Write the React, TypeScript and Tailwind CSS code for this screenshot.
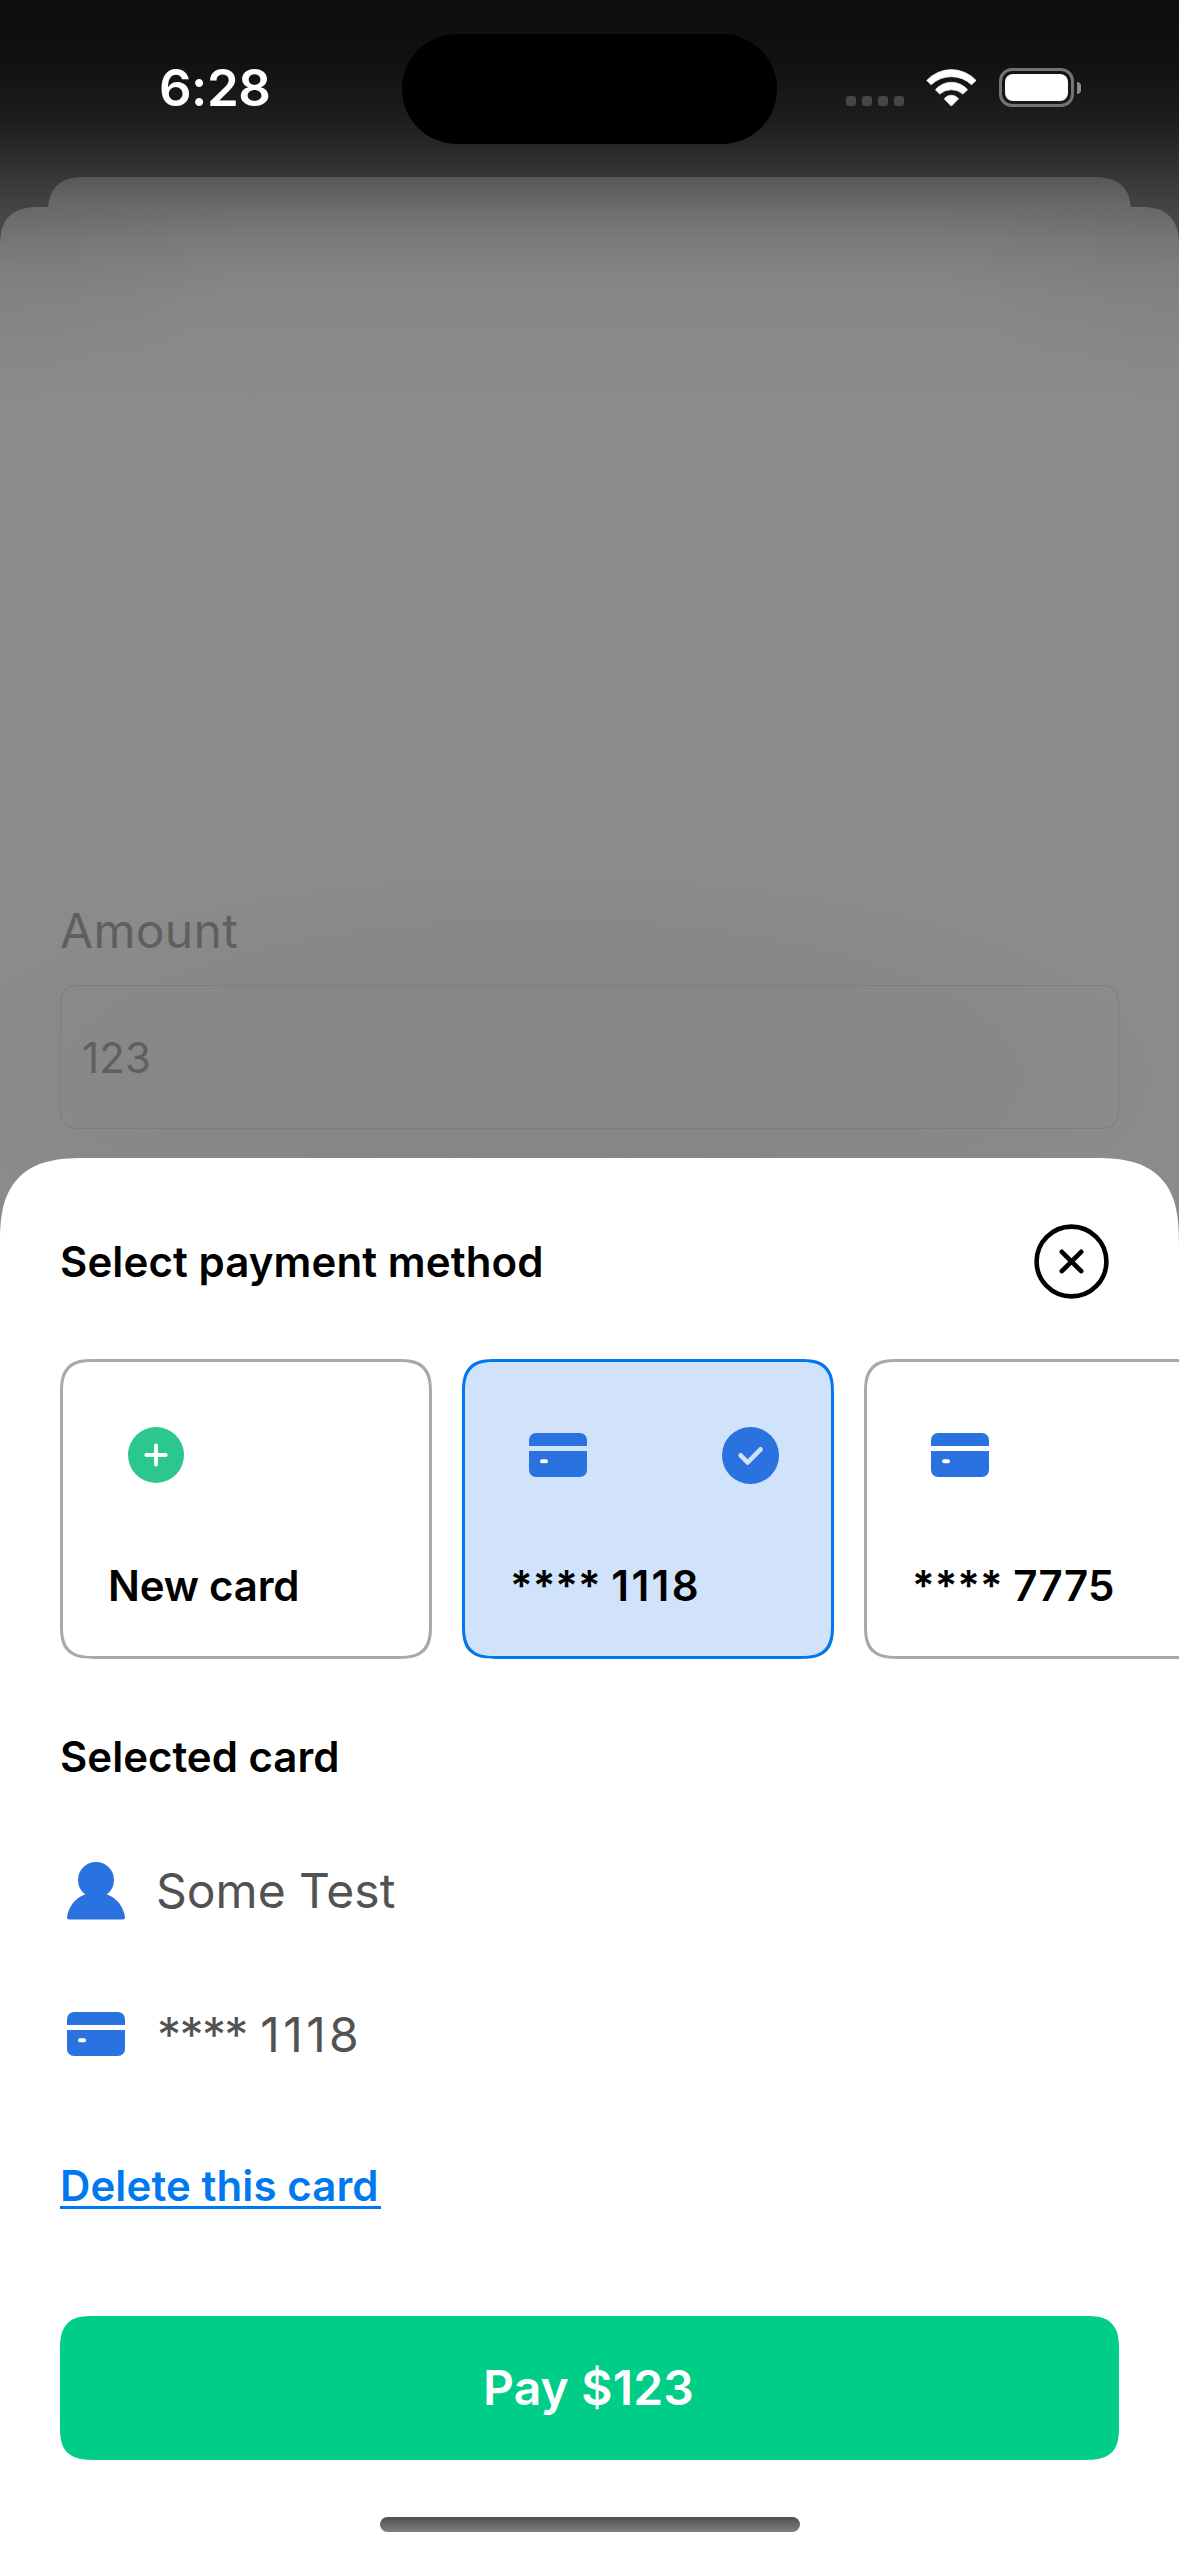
import React from "react";

const smooth24 =
  "rounded-[24px] supports-[corner-shape:superellipse(1.7)]:rounded-[34px] supports-[corner-shape:superellipse(1.7)]:[corner-shape:superellipse(1.5)]";

function WifiIcon() {
  return (
    <svg className="h-[37.5px] w-[51px]" viewBox="439 206 152 112" fill="#fff" stroke="#fff" strokeWidth="2" strokeLinejoin="round">
      <path d="M441 240A100.6 100.6 0 0 1 588.500 240L575 253A88 88 0 0 0 454 253Z" />
      <path d="M467 268A62.600 62.600 0 0 1 563 268L549 281A52 52 0 0 0 480 281Z" />
      <path d="M493 295A27 27 0 0 1 536 295L514.500 317Z" />
    </svg>
  );
}

function CardIcon() {
  return (
    <svg className="block h-[44px] w-[58px] shrink-0" viewBox="0 0 58 44">
      <path d="M0 13V7a7 7 0 0 1 7-7h44a7 7 0 0 1 7 7v6Z" fill="#2972e0" />
      <path d="M0 18h58v19a7 7 0 0 1-7 7H7a7 7 0 0 1-7-7Z" fill="#2972e0" />
      <rect x="11" y="26.200" width="8" height="4" rx="2" fill="#fff" />
    </svg>
  );
}

function PlusIcon() {
  return (
    <svg className="ml-px block size-14" viewBox="0 0 56 56">
      <circle cx="28" cy="28" r="28" fill="#2bc78d" />
      <path d="M28 18.300v19.400M18.300 28h19.400" stroke="#fff" strokeWidth="3.800" strokeLinecap="round" />
    </svg>
  );
}

function CheckIcon() {
  return (
    <svg className="block size-[57px]" viewBox="0 0 57 57">
      <circle cx="28.500" cy="28.500" r="28.500" fill="#2972e0" />
      <path d="M18.600 28.300l7 7.200 13-13.200" fill="none" stroke="#d0e3fb" strokeWidth="4.600" strokeLinecap="round" strokeLinejoin="round" />
    </svg>
  );
}

function PersonIcon() {
  return (
    <svg className="block h-[58px] w-[58px] shrink-0" viewBox="0 0 58 58" fill="#2972e0">
      <circle cx="29" cy="18" r="18" />
      <path d="M18 32.500C8 36 1.500 45 0 55q-.2 2.500 2 2.500h54q2.200 0 2-2.500C56.500 45 50 36 40 32.500Z" />
    </svg>
  );
}

function CloseIcon() {
  return (
    <svg className="block size-[75px]" viewBox="0 0 75 75" fill="none" stroke="#000">
      <circle cx="37.500" cy="37.500" r="34.900" strokeWidth="4.600" />
      <path d="M27.800 27.800l19.400 19.400M47.200 27.800L27.800 47.200" strokeWidth="4.600" strokeLinecap="round" />
    </svg>
  );
}

function StatusBar() {
  return (
    <header className="flex h-[177px] items-start">
      <div className="w-[402px] pt-[59px] pl-[159px] text-[51px] leading-[58px] font-semibold tracking-[-0.5px] text-white">6:28</div>
      <div className="mt-[34px] h-[110px] w-[375px] rounded-full bg-black" />
      <div className="mt-[68px] ml-[69px] flex h-[39px] items-center">
        <div className="mt-[27px] flex gap-1.5">
          {[0, 1, 2, 3].map((i) => (
            <span key={i} className="size-2.5 rounded-[3px] bg-[#464646]" />
          ))}
        </div>
        <div className="ml-[22px]">
          <WifiIcon />
        </div>
        <div className="ml-[22px] h-[39px] w-[75px] rounded-[13px] border-3 border-[#747474] p-[3px]">
          <div className="h-full w-full rounded-[8px] bg-white" />
        </div>
        <div className="ml-[3px] h-3 w-1 rounded-r-full bg-[#8a8a8a]" />
      </div>
    </header>
  );
}

type MethodProps = { label: React.ReactNode; icon: React.ReactNode; selected?: boolean };

function MethodCard({ label, icon, selected }: MethodProps) {
  return (
    <button
      className={`flex h-[300px] w-[372px] shrink-0 flex-col border-3 pt-[64px] pl-[45px] text-left ${smooth24} ${
        selected ? "border-[#0079f0] bg-[#d0e3fb]" : "border-[#a9a9a9] bg-white"
      }`}
    >
      <div className="flex h-[58px] w-full items-center justify-between pr-[52px] pl-[19px]">
        {icon}
        {selected && <CheckIcon />}
      </div>
      <div className="mt-[76px] text-[42px] leading-[52px] font-semibold whitespace-pre">{label}</div>
    </button>
  );
}

type MaskedProps = { digits: string; starClass?: string; digitClass?: string };

function Masked({ digits, starClass, digitClass }: MaskedProps) {
  return (
    <>
      <span className={starClass}>****</span> <span className={digitClass}>{digits}</span>
    </>
  );
}

export default function App() {
  return (
    <div className="flex h-[2556px] w-[1179px] flex-col overflow-hidden bg-[linear-gradient(to_bottom,#0d0d0d_0px,#101010_50px,#151515_85px,#1c1c1c_115px,#272727_145px,#373737_177px,#444444_210px,#505050_250px)] font-[Inter,sans-serif] text-black">
      <StatusBar />
      <div className="mx-12 h-[30px] overflow-hidden">
        <div className="h-[80px] rounded-[30px] bg-[linear-gradient(to_bottom,#575757_0px,#6a6a6a_30px)] supports-[corner-shape:superellipse(1.7)]:rounded-[38px] supports-[corner-shape:superellipse(1.7)]:[corner-shape:superellipse(1.4)]" />
      </div>
      <div className="flex flex-1 flex-col rounded-t-[30px] bg-[radial-gradient(ellipse_260px_200px_at_0px_0px,rgba(0,0,0,0.06),transparent),radial-gradient(ellipse_260px_200px_at_1179px_0px,rgba(0,0,0,0.06),transparent),radial-gradient(ellipse_640px_210px_at_540px_870px,rgba(0,0,0,0.038),rgba(0,0,0,0.032)_60%,transparent),linear-gradient(to_bottom,#6d6d6d_0px,#7b7b7b_32px,#838383_62px,#878787_92px,#898989_135px,#8b8b8b_200px)] supports-[corner-shape:superellipse(1.7)]:rounded-t-[40px] supports-[corner-shape:superellipse(1.7)]:[corner-shape:superellipse(1.4)]">
        <div className="flex flex-col px-[60px] pt-[695px] text-[#5f5f5f]">
          <label className="text-[48px] leading-[58px] tracking-[0.3px]">Amount</label>
          <div className="mt-[25px] flex h-36 items-center rounded-[16px] border border-[#7d7d7d] pl-[21px] text-[42px] tracking-[0.2px]">123</div>
        </div>
        <section className="mt-[29px] flex flex-1 flex-col rounded-t-[64px] bg-white supports-[corner-shape:superellipse(1.7)]:rounded-t-[88px] supports-[corner-shape:superellipse(1.7)]:[corner-shape:superellipse(1.5)]">
          <div className="flex items-center justify-between pt-[66px] pr-[70px] pl-[60px]">
            <h1 className="text-[42px] leading-[52px] font-semibold tracking-[0.1px]">Select payment method</h1>
            <button aria-label="Close">
              <CloseIcon />
            </button>
          </div>
          <div className="mt-[60px] flex gap-[30px] overflow-hidden pl-[60px]">
            <MethodCard label={<span className="tracking-[-0.2px]">New card</span>} icon={<PlusIcon />} />
            <MethodCard selected label={<Masked digits="1118" digitClass="tracking-[2.4px]" />} icon={<CardIcon />} />
            <MethodCard label={<Masked digits="7775" digitClass="tracking-[0.3px]" />} icon={<CardIcon />} />
          </div>
          <h2 className="mt-[72px] pl-[60px] text-[42px] leading-[52px] font-semibold">Selected card</h2>
          <div className="mt-[77px] flex h-[62px] items-center pl-[67px] text-[48px] leading-[62px] text-[#525252]">
            <PersonIcon />
            <span className="ml-[31px]">Some Test</span>
          </div>
          <div className="mt-[82px] flex h-[62px] items-center pl-[67px] text-[48px] leading-[62px] text-[#525252]">
            <div className="pb-0.5">
              <CardIcon />
            </div>
            <span className="ml-[32px]">
              <Masked digits="1118" starClass="tracking-[-1.6px]" digitClass="tracking-[3.4px]" />
            </span>
          </div>
          <a className="mt-[93px] ml-[60px] h-[50px] w-[321px] border-b-3 border-[#0079f0] text-[42px] leading-[53px] font-semibold tracking-[0.1px] whitespace-nowrap text-[#0079f0]">
            Delete this card
          </a>
          <button className={`mx-[60px] mt-[107px] flex h-36 items-center justify-center bg-[#00cd88] pr-0.5 text-[48px] font-semibold tracking-[0.2px] text-white ${smooth24}`}>
            Pay $123
          </button>
          <div className="mt-[57px] h-[15px] w-[420px] self-center rounded-full bg-linear-to-b from-[#4e4e4e] to-[#818181]" />
        </section>
      </div>
    </div>
  );
}
